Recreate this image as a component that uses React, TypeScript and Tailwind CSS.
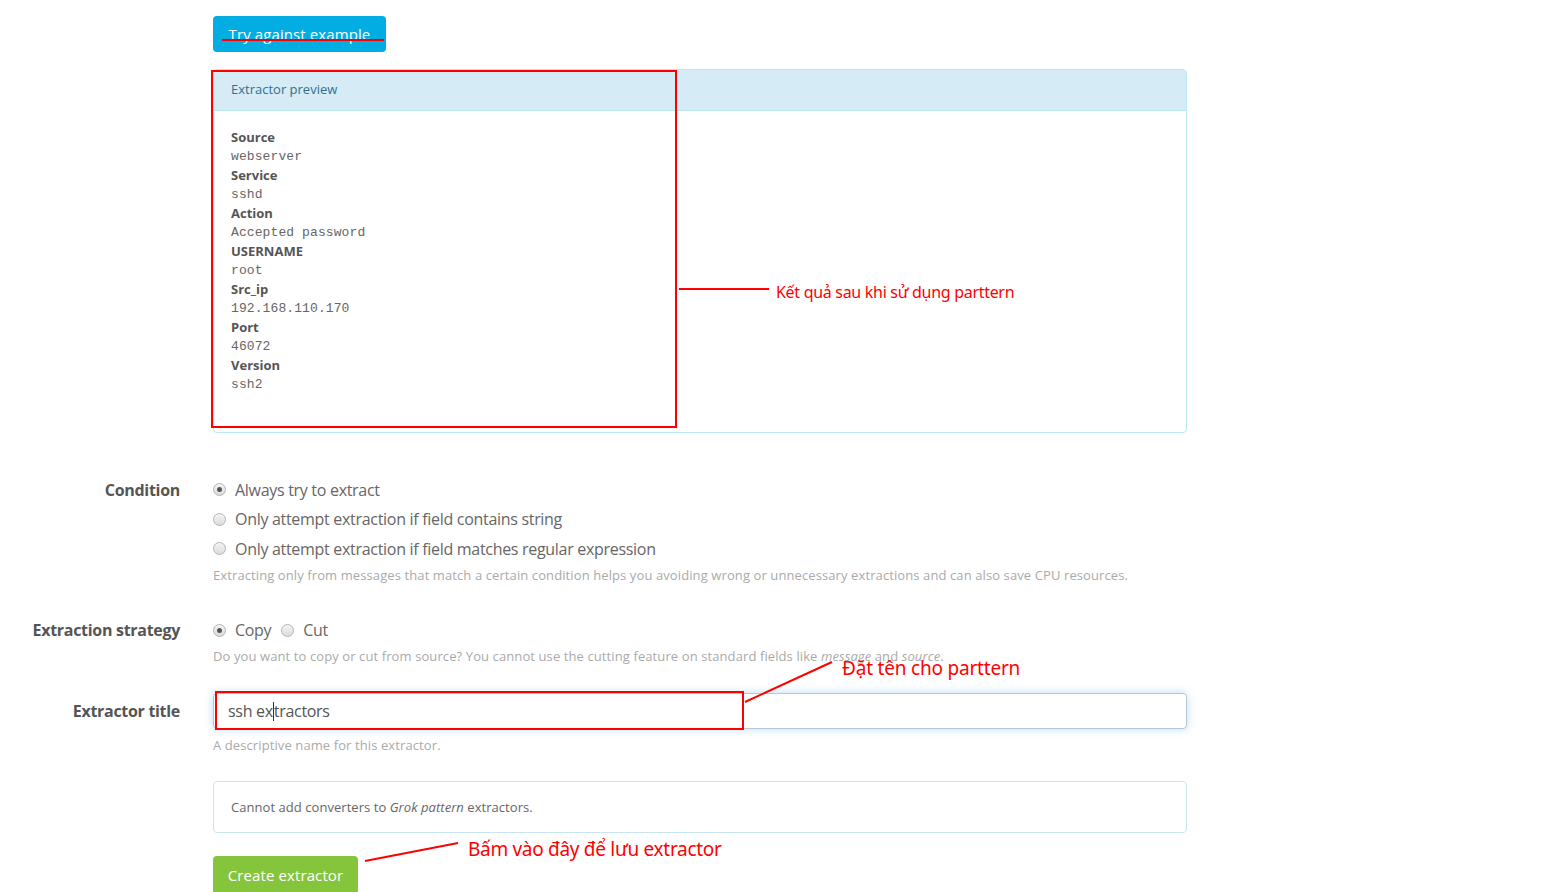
import React from "react";

const sans = { fontFamily: '"Open Sans", "Noto Sans", sans-serif' };

function Radio({ checked }: { checked?: boolean }) {
  return (
    <span className="relative inline-flex h-[13px] w-[13px] shrink-0 items-center justify-center rounded-full border border-[#b4b4b4] bg-gradient-to-b from-[#f4f4f4] to-[#dcdcdc]">
      {checked && <span className="h-[5px] w-[5px] rounded-full bg-[#555]" />}
    </span>
  );
}

function Field({ label, children }: { label: string; children: React.ReactNode }) {
  return (
    <div className="flex">
      <div className="flex h-[29.5px] w-[180px] shrink-0 items-center justify-end text-[16px] font-bold text-[#555] tracking-[-0.3px]">
        {label}
      </div>
      <div className="ml-[33px] w-[974px]">{children}</div>
    </div>
  );
}

const fields: [string, string][] = [
  ["Source", "webserver"],
  ["Service", "sshd"],
  ["Action", "Accepted password"],
  ["USERNAME", "root"],
  ["Src_ip", "192.168.110.170"],
  ["Port", "46072"],
  ["Version", "ssh2"],
];

export default function App() {
  return (
    <div className="relative h-[892px] w-[1560px] overflow-hidden bg-white" style={sans}>
      <div className="flex flex-col pt-[16px]">
        <div className="ml-[213px] w-[974px]">
          <button className="h-[36px] w-[173px] rounded-[4px] bg-[#02ade4] text-center text-[15px] text-white tracking-[0.1px]">
            Try against example
          </button>
          <div className="mt-[17px] rounded-[4px] border border-[#bce8f1]">
            <div className="flex h-[41px] items-center border-b border-[#bce8f1] bg-[#d5ebf6] px-[17px] text-[13px] text-[#31708f]">
              Extractor preview
            </div>
            <div className="px-[17px] pt-[17px] pb-[38px]">
              {fields.map(([k, v]) => (
                <div key={k}>
                  <div className="h-[18px] text-[13px] font-bold leading-[18px] text-[#555]">{k}</div>
                  <div
                    className="h-[20px] pt-[2px] text-[13px] leading-[18px] text-[#666] tracking-[0.1px]"
                    style={{ fontFamily: '"Liberation Mono", "DejaVu Sans Mono", monospace' }}
                  >
                    {v}
                  </div>
                </div>
              ))}
            </div>
          </div>
        </div>

        <div className="mt-[42px]">
          <Field label="Condition">
            <div className="flex flex-col text-[16px] text-[#666] tracking-[-0.3px]">
              <label className="flex h-[29.5px] items-center gap-[9px]">
                <Radio checked /> Always try to extract
              </label>
              <label className="flex h-[29.5px] items-center gap-[9px]">
                <Radio /> Only attempt extraction if field contains string
              </label>
              <label className="flex h-[29.5px] items-center gap-[9px]">
                <Radio /> Only attempt extraction if field matches regular expression
              </label>
            </div>
            <div className="text-[13px] leading-[22px] text-[#aaa] tracking-[0.1px]">
              Extracting only from messages that match a certain condition helps you avoiding wrong or unnecessary extractions and can also save CPU resources.
            </div>
          </Field>
        </div>

        <div className="mt-[30px]">
          <Field label="Extraction strategy">
            <div className="flex h-[29.5px] items-center text-[16px] text-[#666] tracking-[-0.3px]">
              <label className="flex items-center gap-[9px]">
                <Radio checked /> Copy
              </label>
              <label className="ml-[10px] flex items-center gap-[9px]">
                <Radio /> Cut
              </label>
            </div>
            <div className="text-[13px] leading-[22px] text-[#aaa] tracking-[0.1px]">
              Do you want to copy or cut from source? You cannot use the cutting feature on standard fields like{" "}
              <i>message</i> and <i>source</i>.
            </div>
          </Field>
        </div>

        <div className="mt-[26px] flex">
          <div className="flex h-[36px] w-[180px] shrink-0 items-center justify-end text-[16px] font-bold text-[#555] tracking-[-0.3px]">
            Extractor title
          </div>
          <div className="ml-[33px] w-[974px]">
            <div className="flex h-[36px] items-center rounded-[4px] border border-[#b9c7d3] bg-white px-[14px] text-[16px] text-[#555] tracking-[-0.3px] shadow-[0_0_8px_rgba(102,175,233,0.45)]">
              ssh ex<span className="inline-block h-[19px] w-px bg-[#333]" />tractors
            </div>
            <div className="mt-[5px] text-[13px] leading-[22px] text-[#aaa] tracking-[0.1px]">
              A descriptive name for this extractor.
            </div>
            <div className="mt-[25px] flex h-[52px] items-center rounded-[4px] border border-[#c8e6ee] px-[17px] pt-[2px] text-[13px] text-[#666] tracking-[0.05px]">
              Cannot add converters to&nbsp;<i>Grok pattern</i>&nbsp;extractors.
            </div>
            <button className="mt-[23px] h-[38px] w-[145px] rounded-[4px] bg-[#85c53c] text-center text-[15px] text-white tracking-[0.1px]">
              Create extractor
            </button>
          </div>
        </div>
      </div>

      {/* annotations */}
      <svg className="pointer-events-none absolute left-0 top-0" width="1560" height="892">
        <line x1="222" y1="40" x2="384" y2="40" stroke="#ff0000" strokeWidth="2" />
        <rect x="212" y="71" width="464" height="356" fill="none" stroke="#ff0000" strokeWidth="2" />
        <line x1="679" y1="289" x2="769" y2="289" stroke="#ff0000" strokeWidth="2" />
        <rect x="216" y="692" width="527" height="37" fill="none" stroke="#ff0000" strokeWidth="2" />
        <line x1="745" y1="702" x2="832" y2="662" stroke="#ff0000" strokeWidth="2" />
        <line x1="365" y1="861" x2="458" y2="843" stroke="#ff0000" strokeWidth="2" />
      </svg>
      <div
        className="absolute left-[776px] top-[281px] text-[16px] leading-[22px] text-[#ff0000] tracking-[-0.3px]"
        style={{ fontFamily: '"Noto Sans", sans-serif' }}
      >
        Kết quả sau khi sử dụng parttern
      </div>
      <div
        className="absolute left-[842px] top-[655px] text-[19px] leading-[26px] text-[#ff0000] tracking-[-0.2px]"
        style={{ fontFamily: '"Noto Sans", sans-serif' }}
      >
        Đặt tên cho parttern
      </div>
      <div
        className="absolute left-[468px] top-[836px] text-[19px] leading-[26px] text-[#ff0000] tracking-[-0.3px]"
        style={{ fontFamily: '"Noto Sans", sans-serif' }}
      >
        Bấm vào đây để lưu extractor
      </div>
    </div>
  );
}
